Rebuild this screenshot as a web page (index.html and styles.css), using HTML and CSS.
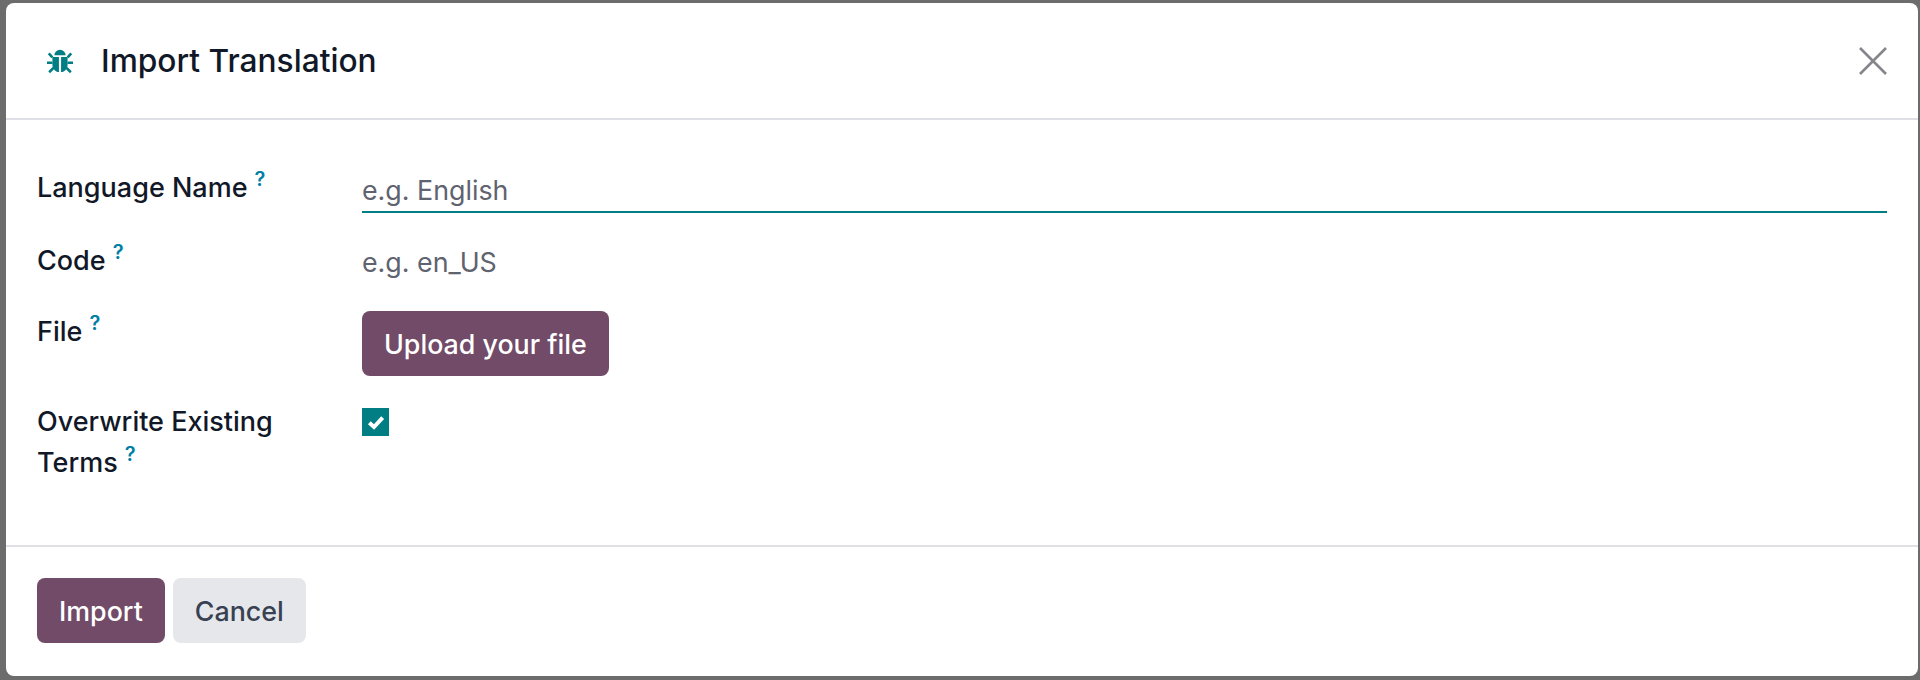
FILE: index.html
```html
<html>
<head>
    <link rel="stylesheet" href="styles.css">
</head>

<body>
    <div class="modal">
        <!-- Header -->
        <header class="modal-header">
            <svg class="bug-icon" viewBox="0 0 24 24">
                <path d="M6.8 6.8a5.2 5.2 0 0 1 10.4 0z" />
                <path d="M5 8.2h6v14c-3.4-.3-6-3.2-6-6.6z" />
                <path d="M13 8.2h6v7.4c0 3.4-2.6 6.3-6 6.6z" />
                <path class="bug-legs" d="M5 8.6 1.6 5M19 8.6l3.4-3.6M5 13.6H0M19 13.6h5M6 18.4 2 22.4M18 18.4l4 4" />
            </svg>
            <h4 class="modal-title">Import Translation</h4>
            <svg class="close-icon" viewBox="0 0 28 28">
                <path d="M1 1 27 27M27 1 1 27" />
            </svg>
        </header>

        <!-- Form -->
        <div class="modal-body">
            <div class="form-row row-name">
                <label class="field-label">Language Name<sup class="help">?</sup></label>
                <div class="text-input">e.g. English</div>
            </div>
            <div class="form-row row-code">
                <label class="field-label">Code<sup class="help">?</sup></label>
                <div class="placeholder">e.g. en_US</div>
            </div>
            <div class="form-row row-file">
                <label class="field-label">File<sup class="help">?</sup></label>
                <div><button class="btn btn-primary">Upload your file</button></div>
            </div>
            <div class="form-row row-overwrite">
                <label class="field-label">Overwrite Existing<br>Terms<sup class="help">?</sup></label>
                <div class="checkbox">
                    <svg viewBox="0 0 12 12">
                        <path d="M2 6.4 4.8 9 10 3.4" />
                    </svg>
                </div>
            </div>
        </div>

        <!-- Footer -->
        <footer class="modal-footer">
            <button class="btn btn-primary">Import</button>
            <button class="btn btn-secondary">Cancel</button>
        </footer>
    </div>
</body>
</html>
```

FILE: styles.css
```css
html, body {
    height: 100%;
}

body {
    font-family: Inter, "Liberation Sans", sans-serif;
    background-color: #6c6c6c;
    color: #111827;
    margin: 0;
    padding: 3px 2px 4px 6px;
    box-sizing: border-box;
    overflow: hidden;
}

.modal {
    height: 673px;
    background-color: white;
    border-radius: 8px;
    display: flex;
    flex-direction: column;
}

.modal-header {
    height: 115px;
    box-sizing: content-box;
    border-bottom: 2px solid #dee0e5;
    display: flex;
    align-items: center;
    padding: 0 31px 0 41px;
}

.bug-icon {
    width: 26px;
    height: 26px;
    fill: #017e84;
    margin-right: 28px;
}

.bug-legs {
    fill: none;
    stroke: #017e84;
    stroke-width: 2.4;
}

.modal-title {
    font-size: 31.7px;
    font-weight: 500;
    margin: 0;
    flex: 1;
}

.close-icon {
    width: 28px;
    height: 28px;
    fill: none;
    stroke: #85868b;
    stroke-width: 2.6;
}

.modal-body {
    height: 425px;
    box-sizing: border-box;
    padding: 45px 31px 0 31px;
}

.form-row {
    display: grid;
    grid-template-columns: 325px 1fr;
}

.row-name {
    height: 72px;
}

.row-code {
    height: 74px;
}

.row-file {
    height: 90px;
}

.field-label {
    font-size: 27px;
    font-weight: 500;
    line-height: 41px;
}

.row-name .field-label {
    padding-top: 2px;
}

.row-code .field-label {
    padding-top: 3px;
}

.help {
    color: #0180a5;
    font-size: 20px;
    font-weight: 600;
    line-height: 0;
    margin-left: 7px;
    position: relative;
    top: -1px;
}

.text-input {
    height: 48px;
    padding-top: 1px;
    line-height: 48px;
    box-sizing: border-box;
    border-bottom: 2px solid #017e84;
    font-size: 26.8px;
    color: #5f636f;
}

.placeholder {
    font-size: 26.8px;
    padding-top: 1px;
    line-height: 48px;
    color: #5f636f;
}

.checkbox {
    width: 27px;
    height: 28px;
    margin-top: 7px;
    background-color: #017e84;
    display: flex;
    align-items: center;
    justify-content: center;
}

.checkbox svg {
    width: 20px;
    height: 20px;
    fill: none;
    stroke: white;
    stroke-width: 2.4;
}

.modal-footer {
    border-top: 2px solid #dee0e5;
    flex: 1;
    display: flex;
    gap: 8px;
    padding: 31px 31px 0 31px;
}

.btn {
    font-family: inherit;
    font-size: 26.8px;
    font-weight: 500;
    height: 65px;
    padding: 0 22px;
    border: none;
    border-radius: 8px;
    cursor: pointer;
}

.btn-primary {
    background-color: #714b67;
    color: white;
}

.btn-secondary {
    background-color: #e6e7eb;
    color: #374151;
}
```
